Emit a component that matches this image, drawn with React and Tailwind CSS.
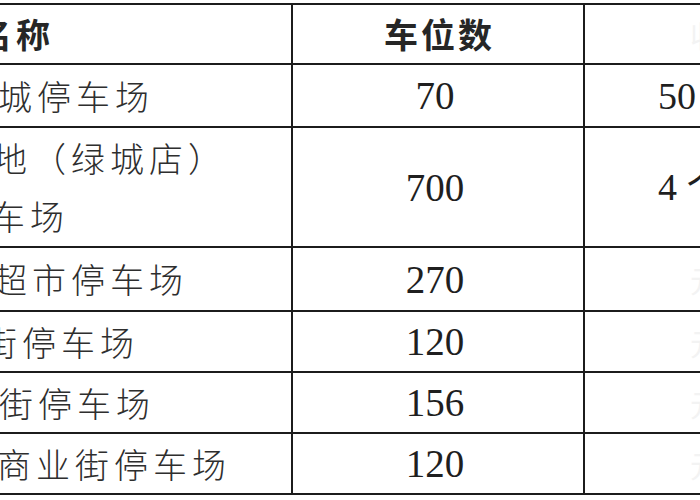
import React from 'react'

const cn = { fontFamily: '"Noto Sans CJK SC", "Noto Sans", sans-serif' }
const num = { fontFamily: '"Liberation Serif", "Noto Sans CJK SC", serif' }

const rows = [
  { h: 'h-[63px]', name: [{ t: '城停车场', ml: '-ml-[2px]' }], count: '70', extra: '50', ghost: false },
  { h: 'h-[120px]', name: [{ t: '地（绿城店）', ml: '-ml-[7px]' }, { t: '车场', ml: '-ml-[9px]' }], count: '700', extra: '4 个', ghost: false },
  { h: 'h-[64px]', name: [{ t: '超市停车场', ml: '-ml-[7px]' }], count: '270', extra: '', ghost: true },
  { h: 'h-[61px]', name: [{ t: '街停车场', ml: '-ml-[17px]' }], count: '120', extra: '', ghost: true },
  { h: 'h-[61px]', name: [{ t: '街停车场', ml: '-ml-[1px]' }], count: '156', extra: '', ghost: true },
  { h: 'h-[61px]', name: [{ t: '商业街停车场', ml: '-ml-[3px]' }], count: '120', extra: '', ghost: true },
]

export default function App() {
  return (
    <div className="w-[700px] h-[500px] overflow-hidden bg-white">
      <div className="mt-[3px] w-[820px] border-t-2 border-[#1c1c1c] text-[#262626]">
        {/* header */}
        <div className="flex h-[60px] border-b-2 border-[#1c1c1c]">
          <div className="w-[293px] shrink-0 border-r-2 border-[#1c1c1c] flex items-center overflow-hidden">
            <span className="-ml-[22px] text-[34px] font-bold tracking-[4px] leading-none whitespace-nowrap" style={cn}>名称</span>
          </div>
          <div className="w-[292px] shrink-0 border-r-2 border-[#1c1c1c] flex items-center justify-center">
            <span className="pl-[3px] text-[34px] font-bold tracking-[3px] leading-none whitespace-nowrap" style={cn}>车位数</span>
          </div>
          <div className="flex-1 flex items-center pl-[105px]">
            <span className="text-[30px] text-[#f3f3f3] leading-none" style={cn}>收</span>
          </div>
        </div>

        {rows.map((r, i) => (
          <div key={i} className={`flex ${r.h} border-b-2 border-[#1c1c1c]`}>
            <div className="w-[293px] shrink-0 border-r-2 border-[#1c1c1c] flex flex-col justify-center overflow-hidden">
              {r.name.map((n, j) => (
                <div key={j} className={`${n.ml} text-[34px] font-light tracking-[5px] leading-[58px] whitespace-nowrap text-[#2e2e2e]`} style={cn}>
                  {n.t}
                </div>
              ))}
            </div>
            <div className="w-[292px] shrink-0 border-r-2 border-[#1c1c1c] flex items-center justify-center">
              <span className="-ml-[6px] text-[39px] leading-none text-[#1f1f1f]" style={num}>{r.count}</span>
            </div>
            <div className="flex-1 flex items-center pl-[73px] whitespace-nowrap">
              {r.extra && (
                <span className="text-[38px] leading-none text-[#1f1f1f]" style={num}>{r.extra}</span>
              )}
              {r.ghost && (
                <span className="ml-[32px] text-[30px] leading-none text-[#f3f3f3]" style={cn}>元</span>
              )}
            </div>
          </div>
        ))}
      </div>
    </div>
  )
}
